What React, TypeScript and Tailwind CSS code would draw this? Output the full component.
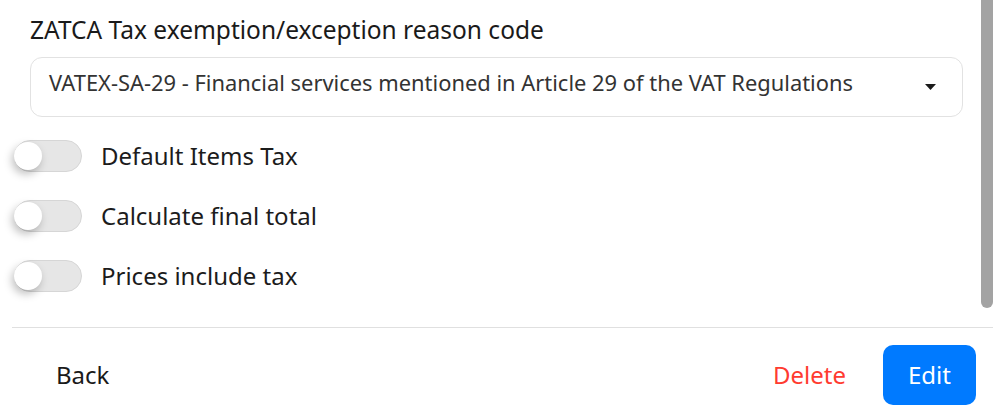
import React from 'react';

const toggles = ['Default Items Tax', 'Calculate final total', 'Prices include tax'];

function Toggle({ label }: { label: string }) {
  return (
    <div className="flex items-center h-[60px]">
      <div className="relative w-[68px] h-[32px] ml-[14px] rounded-full bg-[#e6e6e6] border border-[#d6d6d6]">
        <span className="absolute left-[-1px] top-[1px] w-[28px] h-[28px] rounded-full bg-white shadow-[-2px_4px_8px_rgba(0,0,0,0.25)]" />
      </div>
      <span className="ml-[19px] text-[24px] leading-[32px] text-[#1c1c1c]">{label}</span>
    </div>
  );
}

export default function App() {
  return (
    <div className="relative w-[1007px] h-[413px] bg-white overflow-hidden font-['Noto_Sans',sans-serif]">
      {/* scrollbar thumb */}
      <div className="absolute right-[14px] top-0 w-[12px] h-[308px] bg-[#a3a3a3] rounded-b-full" />

      <div className="h-[327px] pt-[14px]">
        <div className="pl-[30px] pr-[44px]">
          <h2 className="text-[24.5px] leading-[32px] text-[#1a1a1a]">ZATCA Tax exemption/exception reason code</h2>
          <div className="mt-[11px] h-[60px] flex items-center justify-between rounded-[12px] border border-[#e2e2e2] pl-[18px] pr-[26px]">
            <span className="text-[21.9px] leading-[30px] mb-[9px] text-[#333]">
              VATEX-SA-29 - Financial services mentioned in Article 29 of the VAT Regulations
            </span>
            <svg width="11" height="6" viewBox="0 0 11 6">
              <path d="M0 0h11L5.5 6z" fill="#1a1a1a" />
            </svg>
          </div>
        </div>
        <div className="mt-[9px]">
          {toggles.map((t) => (
            <Toggle key={t} label={t} />
          ))}
        </div>
      </div>

      <div className="mx-[12px] w-[981px] border-t border-[#e0e0e0]" />

      <div className="flex items-center h-[85px] pt-[8px] pl-[56px] pr-[31px]">
        <button className="text-[24px] text-[#1a1a1a]">Back</button>
        <div className="ml-auto flex items-center">
          <button className="text-[24px] text-[#ff3b30] mr-[37px]">Delete</button>
          <button className="w-[93px] h-[60px] rounded-[10px] bg-[#007aff] text-white text-[24px]">Edit</button>
        </div>
      </div>
    </div>
  );
}
